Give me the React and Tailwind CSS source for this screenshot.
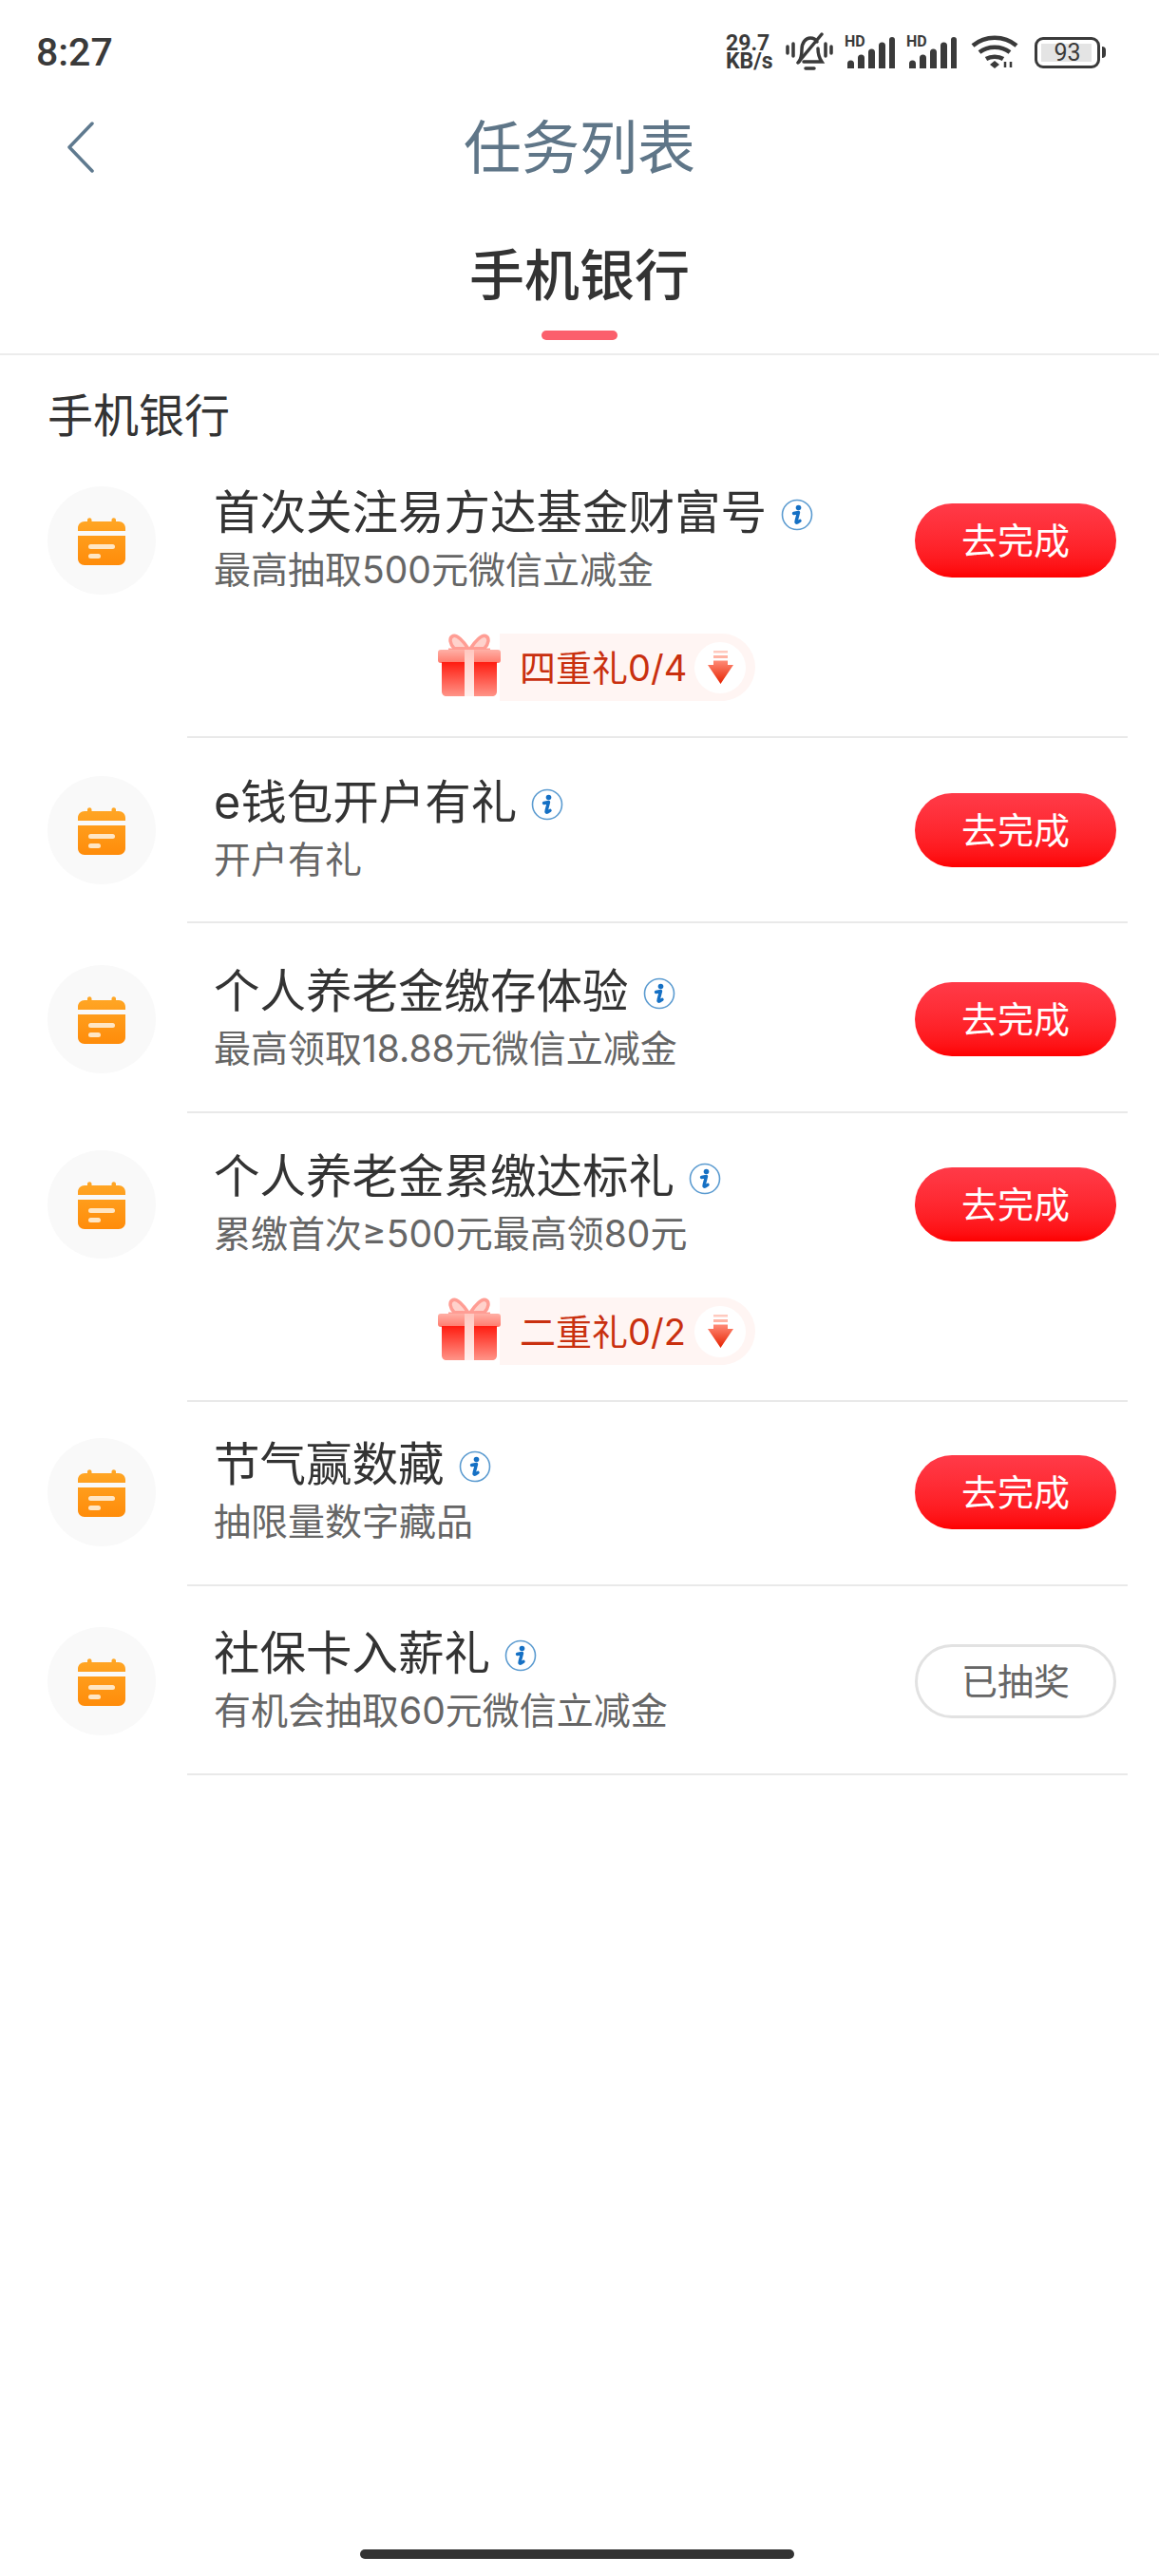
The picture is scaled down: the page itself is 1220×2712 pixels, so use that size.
const rows = [
  { title: "首次关注易方达基金财富号", sub: "最高抽取500元微信立减金", gift: "四重礼0/4", rowClass: "pt-[50px]" },
  { title: "e钱包开户有礼", sub: "开户有礼", rowClass: "pt-[39px] pb-[38px]" },
  { title: "个人养老金缴存体验", sub: "最高领取18.88元微信立减金", rowClass: "pt-[43px] pb-[39px]" },
  { title: "个人养老金累缴达标礼", sub: "累缴首次≥500元最高领80元", gift: "二重礼0/2", rowClass: "pt-[38px]" },
  { title: "节气赢数藏", sub: "抽限量数字藏品", rowClass: "pt-[37px] pb-[39px]" },
  { title: "社保卡入薪礼", sub: "有机会抽取60元微信立减金", done: true, rowClass: "pt-[42px] pb-[39px]" },
];

const CalendarIcon = () => (
  <svg width="50" height="51" viewBox="0 0 50 51">
    <defs>
      <linearGradient id="cal" x1="0" y1="0" x2="0" y2="1">
        <stop offset="0" stopColor="#ffa726" />
        <stop offset="1" stopColor="#ff8c0a" />
      </linearGradient>
    </defs>
    <path d="M10 3.5c0-3 4.500-3 4.500 0V5h21V3.500c0-3 4.500-3 4.500 0V5h3c4 0 7 3 7 7v3H0v-3c0-4 3-7 7-7h3zM0 20h50v24c0 4-3 7-7 7H7c-4 0-7-3-7-7z" fill="url(#cal)" />
    <rect x="11" y="29" width="28" height="5" rx="2.5" fill="#ffe6c4" />
    <rect x="11" y="39" width="13" height="5" rx="2.5" fill="#ffe6c4" />
  </svg>
);

const InfoIcon = () => (
  <svg width="34" height="34" viewBox="0 0 34 34" className="shrink-0">
    <circle cx="17" cy="17" r="15.5" fill="#fff" stroke="#5b9bd0" strokeWidth="1.6" />
    <circle cx="18.500" cy="9.500" r="2.800" fill="#1570c4" />
    <path d="M13.500 15.500l5-1-2.500 9.500c-.3 1 .5 1.400 1.300 1l2.700-1.600" fill="none" stroke="#1570c4" strokeWidth="3.400" strokeLinecap="round" strokeLinejoin="round" />
  </svg>
);

const GiftIcon = () => (
  <svg width="66" height="66" viewBox="0 0 66 66">
    <defs>
      <linearGradient id="box" x1="0" y1="0" x2="0" y2="1">
        <stop offset="0" stopColor="#ff1c10" />
        <stop offset="1" stopColor="#ff9488" />
      </linearGradient>
      <linearGradient id="lid" x1="0" y1="0" x2="0" y2="1">
        <stop offset="0" stopColor="#ffb0a6" />
        <stop offset="1" stopColor="#ff7a6c" />
      </linearGradient>
      <linearGradient id="ribbon" x1="0" y1="0" x2="0" y2="1">
        <stop offset="0" stopColor="#ffc8c0" />
        <stop offset="1" stopColor="#fff0ee" />
      </linearGradient>
    </defs>
    <path d="M32 16C27 8 20 1 16 2.500c-5 2-3 9 1 13zM34 16C39 8 46 1 50 2.500c5 2 3 9-1 13z" fill="#ffd2cc" stroke="#ff9d94" strokeWidth="3.500" />
    <path d="M11 16.500h44" stroke="#ff9d94" strokeWidth="2" />
    <rect x="0" y="17" width="66" height="14" rx="3" fill="url(#lid)" />
    <path d="M4 30h58v31c0 3-2 5-5 5H9c-3 0-5-2-5-5z" fill="url(#box)" />
    <rect x="28" y="17" width="10" height="49" fill="url(#ribbon)" />
  </svg>
);

const ArrowIcon = () => (
  <svg width="27" height="35" viewBox="0 0 27 35">
    <defs>
      <linearGradient id="arrow" x1="0" y1="0" x2="0" y2="1">
        <stop offset="0" stopColor="#ff8a76" />
        <stop offset="1" stopColor="#e62200" />
      </linearGradient>
    </defs>
    <rect x="6" y="0" width="15" height="2.500" fill="#ffcabf" />
    <rect x="6" y="5" width="15" height="3" fill="#ffb4a4" />
    <path d="M6 10.500h15v4.500h6L13.500 35 0 15h6z" fill="url(#arrow)" />
  </svg>
);

const SignalIcon = () => (
  <div className="relative w-[53px] h-[34px]">
    <span className="absolute left-0 -top-[1px] text-[16px] leading-[14px] font-bold font-['Roboto',sans-serif]">HD</span>
    <svg width="53" height="34" viewBox="0 0 53 34" className="absolute left-0 top-0">
      <path d="M3 34v-5a3.500 3.500 0 017 0v5zM14 34V23a3.500 3.500 0 017 0v11zM25 34V17a3.500 3.500 0 017 0v17zM36 34V10a3.500 3.500 0 017 0v24zM47 34V4a3 3 0 016 0v30z" fill="#3a3a3a" />
    </svg>
  </div>
);

const StatusBar = () => (
  <div className="h-[110px] flex items-center justify-between pl-[38px] pr-[56px] text-[#3a3a3a]">
    <span className="text-[41px] leading-none font-medium font-['Roboto',sans-serif]">8:27</span>
    <div className="flex items-center">
      <div className="w-[52px] text-[23px] leading-[19px] font-bold font-['Roboto',sans-serif]">
        29.7<br />KB/s
      </div>
      <svg width="50" height="42" viewBox="0 0 50 42" className="ml-[11px]" fill="none" stroke="#3a3a3a" strokeWidth="3.500" strokeLinecap="round">
        <path d="M2 15v7M8 12v13M42 12v13M48 15v7" />
        <path d="M14 31c2-3 3-7 3-13 0-7 4-12 9-12 3 0 6 2 7 4M34 17c0 6 2 11 4 14H19" />
        <path d="M13 32L38 2" />
        <path d="M21 38h9" />
      </svg>
      <div className="ml-[12px]"><SignalIcon /></div>
      <div className="ml-[12px]"><SignalIcon /></div>
      <svg width="50" height="36" viewBox="0 0 50 36" className="ml-[15px]" fill="none" stroke="#3a3a3a" strokeWidth="4.500">
        <path d="M2 11c13-11 33-11 46 0M9 18c9-7 23-7 32 0M16 25c5-3 13-3 18 0" />
        <path d="M20 31l5-4 5 4-5 4z" fill="#3a3a3a" stroke="none" />
        <path d="M36 34v-6M42 28v6" strokeWidth="2.500" />
      </svg>
      <div className="ml-[17px] relative w-[69px] h-[33px] rounded-[9px] border-[3px] border-[#3a3a3a] flex items-center justify-center">
        <div className="absolute left-[4px] right-[6px] top-[4px] bottom-[4px] bg-[#e4e4e4]" />
        <span className="relative text-[25px] leading-none font-['Roboto',sans-serif]">93</span>
      </div>
      <div className="ml-[2px] w-[4px] h-[12px] rounded-r bg-[#3a3a3a]" />
    </div>
  </div>
);

const TaskRow = ({ row }) => (
  <div>
    <div className={row.rowClass}>
      <div className="flex items-center pl-[50px] pr-[45px]">
        <div className="w-[114px] h-[114px] shrink-0 rounded-full bg-[#f9f9f9] flex items-center justify-center">
          <CalendarIcon />
        </div>
        <div className="ml-[61px] flex-1">
          <div className="flex items-center h-[62px]">
            <span className="text-[#333333] text-[48.500px] leading-none -mt-[4px]">{row.title}</span>
            <span className="ml-[15px]"><InfoIcon /></span>
          </div>
          <div className="text-[#666666] text-[39px] leading-[54px]">{row.sub}</div>
        </div>
        {row.done ? (
          <button className="w-[212px] h-[78px] rounded-full bg-white border-[3px] border-[#e2e2e2] text-[#666666] text-[38px]">已抽奖</button>
        ) : (
          <button className="w-[212px] h-[78px] rounded-full bg-linear-to-b from-[#ff3a48] to-[#fe0000] text-white text-[38px]">去完成</button>
        )}
      </div>
      {row.gift && (
        <div className="flex items-center pl-[461px] mt-[40px] mb-[37px]">
          <div className="relative z-10 -mr-[1px] -mt-[6px]"><GiftIcon /></div>
          <div className="h-[71px] w-[269px] rounded-r-full bg-[#fff5f3] flex items-center justify-between pl-[21px] pr-[10px]">
            <span className="text-[#c9300f] text-[38px] leading-none">{row.gift}</span>
            <div className="w-[54px] h-[54px] rounded-full bg-white flex items-center justify-center">
              <ArrowIcon />
            </div>
          </div>
        </div>
      )}
    </div>
    <div className="ml-[197px] mr-[33px] h-[2px] bg-[#e9e9e9]" />
  </div>
);

export default function App() {
  return (
    <div className="relative w-[1220px] h-[2712px] bg-white font-['Inter','Noto_Sans_CJK_SC',sans-serif]">
      <StatusBar />
      <div className="relative h-[90px] flex items-center justify-center">
        <svg width="30" height="54" viewBox="0 0 30 54" className="absolute left-[70px] top-[18px]" fill="none" stroke="#5f7a8f" strokeWidth="3.500" strokeLinecap="round" strokeLinejoin="round">
          <path d="M27 2L3 27l24 25" />
        </svg>
        <span className="text-[#5f7688] text-[61px] leading-none mt-[2px]">任务列表</span>
      </div>
      <div className="h-[174px] border-b-2 border-[#ececec] flex flex-col items-center">
        <span className="text-[#333333] text-[58px] leading-none font-medium mt-[61px]">手机银行</span>
        <div className="w-[80px] h-[10px] mt-[29px] rounded-full bg-[#fb5f6c]" />
      </div>
      <h2 className="text-[#333333] text-[48px] leading-none font-normal ml-[50px] mt-[40px]">手机银行</h2>
      <div className="-mt-[1px]">
        {rows.map((row) => (
          <TaskRow key={row.title} row={row} />
        ))}
      </div>
      <div className="absolute bottom-[18px] left-[379px] w-[457px] h-[10px] rounded-full bg-[#333333]" />
    </div>
  );
}
